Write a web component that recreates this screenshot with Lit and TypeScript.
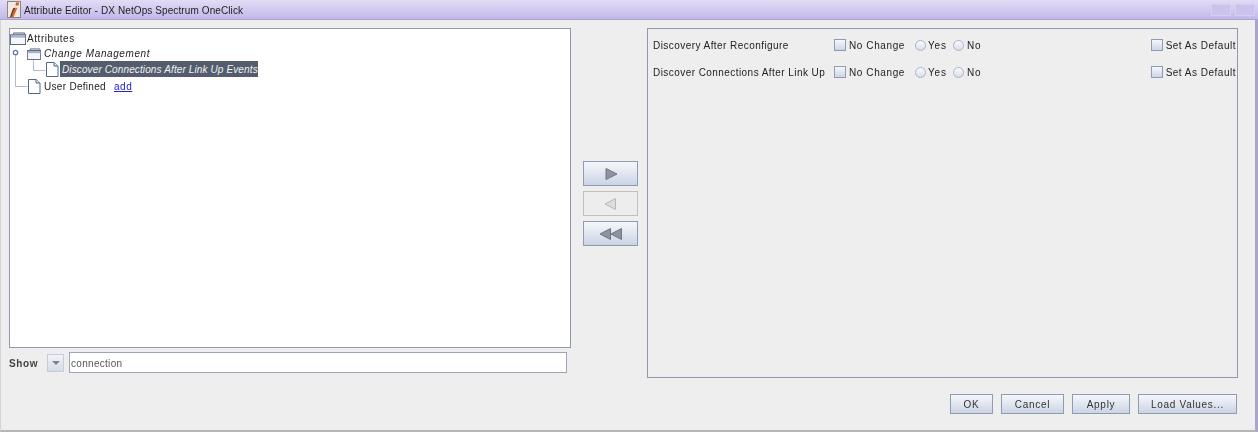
import { LitElement, html, css, svg } from "lit";
import { customElement } from "lit/decorators.js";

const folder = (w: number, h: number) => svg`<svg class="ic" width="${w}" height="${h}" viewBox="0 0 18 14" preserveAspectRatio="none"><path d="M4 3V1H16.5V3" fill="#cfd6e4" stroke="#5d6b85"/><rect x="0.5" y="3" width="17" height="10.5" fill="#f4f6fa" stroke="#4f5d78"/><rect x="1" y="3.5" width="16" height="2.5" fill="#a4b1c9"/></svg>`;
const page = svg`<svg class="ic" width="13" height="15" viewBox="0 0 13 15"><path d="M.5 .5H8L12 4V14.5H.5Z" fill="#fff" stroke="#54668a"/><path d="M8 .5V4H12" fill="#e3e8f0" stroke="#54668a"/></svg>`;
const logo = svg`<svg width="14" height="17" viewBox="0 0 14 17"><rect width="14" height="17" fill="#efe9df"/><rect x=".5" y=".5" width="13" height="16" fill="none" stroke="#8b8680"/><path d="M6 7.5L8.5 6.5L5.5 16H3Z" fill="#2e2a28"/><path d="M7 8L10.5 6.5L6.5 16H4Z" fill="#e0611c"/><path d="M9 1.5L12 1.5L11.5 4.5L8.5 4.5Z" fill="#d9571a"/></svg>`;

const tri = (d: string, f: string, s: string) => svg`<svg width="24" height="14" viewBox="0 0 24 14"><path d="${d}" fill="${f}" stroke="${s}" stroke-width="1"/></svg>`;

@customElement("app-root")
export class AppRoot extends LitElement {
  static styles = css`
    :host { display: block; width: 1258px; height: 432px; overflow: hidden; background: #eeeeee;
      font-family: "Liberation Sans", Arial, sans-serif; font-size: 10px; color: #222; letter-spacing: .55px; }
    .win { height: 432px; box-sizing: border-box; display: flex; flex-direction: column;
      border-left: 1px solid #d4d4d4; border-right: 3px solid #a9a5cf; border-bottom: 2px solid #b5b5b5; filter: blur(.5px); }
    .title { height: 20px; flex: none; margin: 0 -3px 0 -1px; display: flex; align-items: center; padding: 0 3px 0 7px;
      background: linear-gradient(#e2dcf5, #c2b8ea); font-size: 10px; border-bottom: 1px solid #a9a4cb; box-sizing: border-box; }
    .title .t { flex: 1; letter-spacing: .1px; margin-left: 3px; margin-top: 1px; }
    .wb { width: 20px; height: 12px; border: 1px solid #d6d0f0; background: #cbc2ee; box-sizing: border-box; margin-left: 4px; }
    .main { flex: 1; display: grid; grid-template-columns: 562px 76px 591px; padding: 8px 0 0 8px; }
    .left { display: flex; flex-direction: column; }
    .tree { height: 320px; box-sizing: border-box; background: #fff; border: 1px solid #8f9aae; padding: 1px 0 0 0; position: relative; }
    .lines { position: absolute; left: 0; top: 0; }
    .row { display: flex; align-items: center; white-space: nowrap; position: relative; height: 16px; }
    .r2 { height: 15px; padding-left: 17px; }
    .r3 { height: 16px; padding-left: 36px; }
    .r4 { height: 16px; padding-left: 18px; margin-top: 1px; }
    .ic { flex: none; }
    .lb { margin-left: 1px; }
    .r2 .lb { margin-left: 3px; letter-spacing: .58px; }
    .r4 .lb { margin-left: 3px; letter-spacing: .3px; }
    .i { font-style: italic; }
    .sel { background: #545d6e; color: #f2f2f2; padding: 0 1px 0 2px; width: 198px; box-sizing: border-box; height: 16px; display: flex; align-items: center; margin-left: 1px; letter-spacing: .12px; }
    .add { color: #2222d8; text-decoration: underline; margin-left: 8px; }
    .show { display: flex; align-items: center; height: 21px; margin-top: 4px; padding-top: 1px; box-sizing: border-box; }
    .show b { font-weight: bold; color: #444; width: 38px; letter-spacing: .6px; }
    .drop { width: 17px; height: 18px; box-sizing: border-box; border: 1px solid #c6ccd8; background: linear-gradient(#f2f4f8, #d5dbe7); display: flex; align-items: center; justify-content: center; margin-right: 5px; }
    .drop i { width: 0; height: 0; border-left: 4px solid transparent; border-right: 4px solid transparent; border-top: 4px solid #7a8598; }
    .input { width: 498px; height: 21px; box-sizing: border-box; background: #fff; border: 1px solid #9aa5b8; padding: 1px 0 0 1px; display: flex; align-items: center; color: #555; letter-spacing: .3px; margin-top: -1px; }
    .mid { display: flex; flex-direction: column; gap: 5px; padding: 133px 0 0 12px; }
    .arrow { width: 55px; height: 25px; box-sizing: border-box; border: 1px solid #8f9bb2; background: linear-gradient(#f6f7fa, #cbd4e5); display: flex; align-items: center; justify-content: center; }
    .arrow.off { background: #ededed; border-color: #c0c0c0; }
    .right { height: 350px; box-sizing: border-box; border: 1px solid #8f9aae; padding: 8px 0 0 5px; }
    .attr { display: flex; align-items: center; height: 16px; margin-bottom: 11px; }
    .attr .name { width: 181px; flex: none; white-space: nowrap; letter-spacing: .44px; }
    .cb { width: 12px; height: 12px; box-sizing: border-box; border: 1px solid #8f9bb2; background: linear-gradient(#f6f7fa, #ccd5e6); flex: none; margin-right: 3px; }
    .rb { width: 11px; height: 11px; box-sizing: border-box; border: 1px solid #a8b2c4; border-radius: 50%; background: linear-gradient(#fafbfd, #d8deea); flex: none; margin-right: 2px; }
    .nc { width: 66px; flex: none; letter-spacing: .6px; }
    .ry { width: 25px; flex: none; letter-spacing: .8px; }
    .no { margin-left: 1px; letter-spacing: .8px; }
    .def { margin-left: auto; margin-right: 1px; display: flex; align-items: center; letter-spacing: .5px; white-space: nowrap; }
    .foot { flex: none; height: 50px; box-sizing: border-box; display: flex; justify-content: flex-end; gap: 8px; padding: 14px 18px 0 0; }
    .btn { height: 20px; box-sizing: border-box; border: 1px solid #8f9bb2; background: linear-gradient(#f6f7fa, #cbd4e5); display: flex; align-items: center; justify-content: center; color: #333; letter-spacing: .7px; }
    .w43 { width: 43px; } .w63 { width: 63px; } .w58 { width: 58px; } .w99 { width: 99px; }
  `;

  attr(name: string) {
    return html`<div class="attr"><span class="name">${name}</span><i class="cb"></i><span class="nc">No Change</span><i class="rb"></i><span class="ry">Yes</span><i class="rb"></i><span class="no">No</span><span class="def"><i class="cb"></i>Set As Default</span></div>`;
  }

  render() {
    return html`<div class="win">
      <div class="title">${logo}<span class="t">Attribute Editor - DX NetOps Spectrum OneClick</span><i class="wb"></i><i class="wb"></i></div>
      <div class="main">
        <div class="left">
          <div class="tree">
            <svg class="lines" width="60" height="70" viewBox="0 0 60 70"><path d="M5.5 24V57.5H17.5M23.5 31V41.5H35.5" fill="none" stroke="#aebbd6"/><circle cx="5.5" cy="23.5" r="2.2" fill="#fff" stroke="#5f7bb0" stroke-width="1.3"/></svg>
            <div class="row">${folder(16, 13)}<span class="lb">Attributes</span></div>
            <div class="row r2">${folder(14, 12)}<span class="lb i">Change Management</span></div>
            <div class="row r3">${page}<span class="sel i">Discover Connections After Link Up Events</span></div>
            <div class="row r4">${page}<span class="lb">User Defined</span><span class="add">add</span></div>
          </div>
          <div class="show"><b>Show</b><span class="drop"><i></i></span><span class="input">connection</span></div>
        </div>
        <div class="mid">
          <div class="arrow">${tri("M7 1.5L18 7L7 12.5Z", "#8f949c", "#6f7580")}</div>
          <div class="arrow off">${tri("M16.5 1.5L6 7L16.5 12.5Z", "#dcdcdc", "#b8b8b8")}</div>
          <div class="arrow">${tri("M11.5 1.5L1 7L11.5 12.5Z M22.5 1.5L12 7L22.5 12.5Z", "#8f949c", "#6f7580")}</div>
        </div>
        <div class="right">${this.attr("Discovery After Reconfigure")}${this.attr("Discover Connections After Link Up")}</div>
      </div>
      <div class="foot">
        <span class="btn w43">OK</span>
        <span class="btn w63">Cancel</span>
        <span class="btn w58">Apply</span>
        <span class="btn w99">Load Values...</span>
      </div>
    </div>`;
  }
}
